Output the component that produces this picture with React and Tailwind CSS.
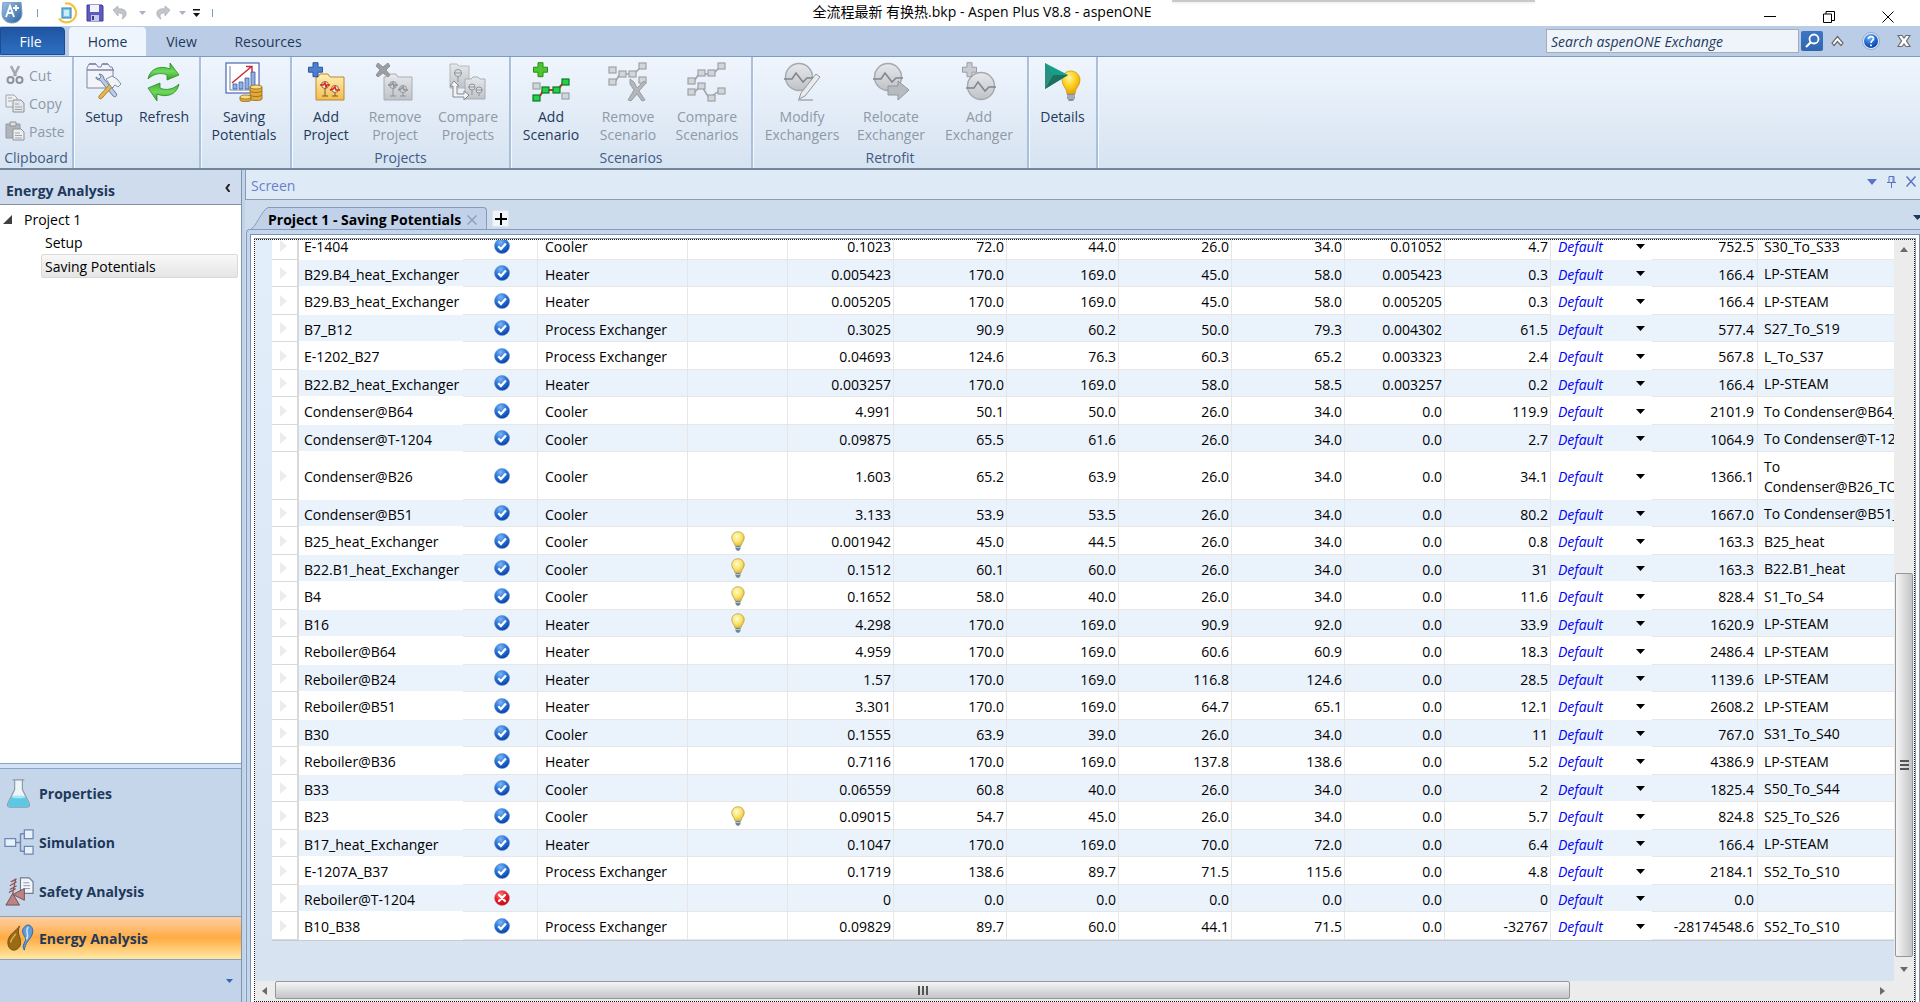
import { useState } from 'react';
import clsx from 'clsx';

const ROWS = [
  ['E-1404', 'ok', 'Cooler', false, '0.1023', '72.0', '44.0', '26.0', '34.0', '0.01052', '4.7', '752.5', 'S30_To_S33'],
  ['B29.B4_heat_Exchanger', 'ok', 'Heater', false, '0.005423', '170.0', '169.0', '45.0', '58.0', '0.005423', '0.3', '166.4', 'LP-STEAM'],
  ['B29.B3_heat_Exchanger', 'ok', 'Heater', false, '0.005205', '170.0', '169.0', '45.0', '58.0', '0.005205', '0.3', '166.4', 'LP-STEAM'],
  ['B7_B12', 'ok', 'Process Exchanger', false, '0.3025', '90.9', '60.2', '50.0', '79.3', '0.004302', '61.5', '577.4', 'S27_To_S19'],
  ['E-1202_B27', 'ok', 'Process Exchanger', false, '0.04693', '124.6', '76.3', '60.3', '65.2', '0.003323', '2.4', '567.8', 'L_To_S37'],
  ['B22.B2_heat_Exchanger', 'ok', 'Heater', false, '0.003257', '170.0', '169.0', '58.0', '58.5', '0.003257', '0.2', '166.4', 'LP-STEAM'],
  ['Condenser@B64', 'ok', 'Cooler', false, '4.991', '50.1', '50.0', '26.0', '34.0', '0.0', '119.9', '2101.9', 'To Condenser@B64_TO'],
  ['Condenser@T-1204', 'ok', 'Cooler', false, '0.09875', '65.5', '61.6', '26.0', '34.0', '0.0', '2.7', '1064.9', 'To Condenser@T-1204'],
  ['Condenser@B26', 'ok', 'Cooler', false, '1.603', '65.2', '63.9', '26.0', '34.0', '0.0', '34.1', '1366.1', 'To\nCondenser@B26_TO'],
  ['Condenser@B51', 'ok', 'Cooler', false, '3.133', '53.9', '53.5', '26.0', '34.0', '0.0', '80.2', '1667.0', 'To Condenser@B51_TO'],
  ['B25_heat_Exchanger', 'ok', 'Cooler', true, '0.001942', '45.0', '44.5', '26.0', '34.0', '0.0', '0.8', '163.3', 'B25_heat'],
  ['B22.B1_heat_Exchanger', 'ok', 'Cooler', true, '0.1512', '60.1', '60.0', '26.0', '34.0', '0.0', '31', '163.3', 'B22.B1_heat'],
  ['B4', 'ok', 'Cooler', true, '0.1652', '58.0', '40.0', '26.0', '34.0', '0.0', '11.6', '828.4', 'S1_To_S4'],
  ['B16', 'ok', 'Heater', true, '4.298', '170.0', '169.0', '90.9', '92.0', '0.0', '33.9', '1620.9', 'LP-STEAM'],
  ['Reboiler@B64', 'ok', 'Heater', false, '4.959', '170.0', '169.0', '60.6', '60.9', '0.0', '18.3', '2486.4', 'LP-STEAM'],
  ['Reboiler@B24', 'ok', 'Heater', false, '1.57', '170.0', '169.0', '116.8', '124.6', '0.0', '28.5', '1139.6', 'LP-STEAM'],
  ['Reboiler@B51', 'ok', 'Heater', false, '3.301', '170.0', '169.0', '64.7', '65.1', '0.0', '12.1', '2608.2', 'LP-STEAM'],
  ['B30', 'ok', 'Cooler', false, '0.1555', '63.9', '39.0', '26.0', '34.0', '0.0', '11', '767.0', 'S31_To_S40'],
  ['Reboiler@B36', 'ok', 'Heater', false, '0.7116', '170.0', '169.0', '137.8', '138.6', '0.0', '5.2', '4386.9', 'LP-STEAM'],
  ['B33', 'ok', 'Cooler', false, '0.06559', '60.8', '40.0', '26.0', '34.0', '0.0', '2', '1825.4', 'S50_To_S44'],
  ['B23', 'ok', 'Cooler', true, '0.09015', '54.7', '45.0', '26.0', '34.0', '0.0', '5.7', '824.8', 'S25_To_S26'],
  ['B17_heat_Exchanger', 'ok', 'Heater', false, '0.1047', '170.0', '169.0', '70.0', '72.0', '0.0', '6.4', '166.4', 'LP-STEAM'],
  ['E-1207A_B37', 'ok', 'Process Exchanger', false, '0.1719', '138.6', '89.7', '71.5', '115.6', '0.0', '4.8', '2184.1', 'S52_To_S10'],
  ['Reboiler@T-1204', 'error', '', false, '0', '0.0', '0.0', '0.0', '0.0', '0.0', '0', '0.0', ''],
  ['B10_B38', 'ok', 'Process Exchanger', false, '0.09829', '89.7', '60.0', '44.1', '71.5', '0.0', '-32767', '-28174548.6', 'S52_To_S10'],
];

const COLS = [
  'w-[27px]', 'w-[164px]', 'w-[75px]', 'w-[150px]', 'w-[100px]', 'w-[106px]', 'w-[113px]', 'w-[112px]',
  'w-[113px]', 'w-[113px]', 'w-[100px]', 'w-[106px]', 'w-[101px]', 'w-[106px]', 'w-[240px]',
];

/* ---------- shared gradients ---------- */

const Gradients = () => (
  <svg className="absolute h-0 w-0" aria-hidden="true">
    <defs>
      <radialGradient id="okBall" cx="40%" cy="25%" r="75%">
        <stop offset="0" stopColor="#7db6f5" />
        <stop offset="0.5" stopColor="#2a77dc" />
        <stop offset="1" stopColor="#0a3fa6" />
      </radialGradient>
      <radialGradient id="errBall" cx="40%" cy="30%" r="75%">
        <stop offset="0" stopColor="#ff8080" />
        <stop offset="0.5" stopColor="#e8202a" />
        <stop offset="1" stopColor="#b30510" />
      </radialGradient>
      <radialGradient id="bulbGlass" cx="40%" cy="35%" r="65%">
        <stop offset="0" stopColor="#fffbd0" />
        <stop offset="0.6" stopColor="#fbe36a" />
        <stop offset="1" stopColor="#e3b93a" />
      </radialGradient>
      <radialGradient id="bulbGold" cx="40%" cy="30%" r="75%">
        <stop offset="0" stopColor="#fff3a0" />
        <stop offset="0.5" stopColor="#fcd01c" />
        <stop offset="1" stopColor="#e09a08" />
      </radialGradient>
      <linearGradient id="greenArrow" x1="0" y1="0" x2="0" y2="1">
        <stop offset="0" stopColor="#3fae35" />
        <stop offset="0.5" stopColor="#6fd95c" />
        <stop offset="1" stopColor="#2f9e28" />
      </linearGradient>
      <linearGradient id="folderGold" x1="0" y1="0" x2="0" y2="1">
        <stop offset="0" stopColor="#fff0b8" />
        <stop offset="1" stopColor="#f3bd4d" />
      </linearGradient>
      <linearGradient id="grayFill" x1="0" y1="0" x2="0" y2="1">
        <stop offset="0" stopColor="#e6e8ea" />
        <stop offset="1" stopColor="#bfc3c8" />
      </linearGradient>
      <linearGradient id="logoFill" x1="0" y1="0" x2="1" y2="1">
        <stop offset="0" stopColor="#9cc3e6" />
        <stop offset="1" stopColor="#2c619e" />
      </linearGradient>
    </defs>
  </svg>
);

/* ---------- table icons ---------- */

const StatusIcon = ({ status }) => (
  <svg className="mx-auto h-4 w-4" viewBox="0 0 16 16">
    <circle cx="8" cy="8" r="7.5" fill={status === 'ok' ? 'url(#okBall)' : 'url(#errBall)'} stroke={status === 'ok' ? '#5e8fd0' : '#d98a8a'} strokeWidth="0.6" />
    {status === 'ok' ? (
      <path d="M4.3 8.2l2.6 2.8 5-5.6" fill="none" stroke="#fff" strokeWidth="2.2" />
    ) : (
      <path d="M5 5l6 6M11 5l-6 6" fill="none" stroke="#fff" strokeWidth="2.2" strokeLinecap="round" />
    )}
  </svg>
);

const BulbIcon = () => (
  <svg className="mx-auto h-5 w-4" viewBox="0 0 16 20">
    <path d="M8 .8C4 .8 1.8 3.600 1.8 6.800c0 3.200 2.600 4.600 3.200 8h6c.6-3.400 3.200-4.800 3.200-8C14.200 3.600 12 .8 8 .8z" fill="url(#bulbGlass)" stroke="#b9a04a" strokeWidth="0.8" />
    <path d="M5.500 15h5v3l-1.500 1.800h-2L5.500 18z" fill="#6f8794" />
    <path d="M5.500 16.500h5" stroke="#c8d6de" strokeWidth="0.8" />
  </svg>
);

/* ---------- ribbon icons ---------- */

const Plus = ({ x, y, fill, stroke }) => (
  <path transform={`translate(${x} ${y})`} d="M5 .7h5v4.500h4.500v5H10v4.500H5v-4.500H.5v-5H5z" fill={fill} stroke={stroke} strokeWidth="1" />
);

const Node = ({ x, y, on }) => (
  <rect x={x} y={y} width="7" height="6" fill={on ? '#22d04a' : '#d3d6d9'} stroke={on ? '#0b7a25' : '#9da2a8'} strokeWidth="1.200" />
);

const SetupIcon = () => (
  <>
    <path d="M3 26V6l2-4h7l2 3h3l1-3h6l2 3h2l1 3v18z" fill="#f3f4f9" stroke="#7d86a5" />
    <path d="M3 8h27M5 2h7M18 2h6" stroke="#7d86a5" strokeWidth="1.400" fill="none" />
    <path d="M16 18c-3 0-4-1-4-3l3 2 2-2-2-3c3 0 5 2 5 5l12 14c2 3-1 5-3 3z" fill="#b9cbe6" stroke="#5f7392" strokeWidth="0.900" />
    <path d="M26 22L15 34c-1 3 2 4 4 1l10-11z" fill="#e6b54c" stroke="#a8782a" strokeWidth="0.900" />
    <path d="M22 17l6-3 5 3 4 5-3 3-3-2-3 3z" fill="#f1f3f6" stroke="#7b8496" strokeWidth="0.900" />
  </>
);

const RefreshIcon = () => (
  <>
    <path d="M4 17C6 6 17 3 26 7V1l9 12-12 5v-5C17 10 9 12 4 17z" fill="url(#greenArrow)" stroke="#2b8d25" strokeWidth="0.800" />
    <path d="M35 22c-2 11-13 14-22 10v7L4 26l12-5v5c6 3 14 1 19-4z" fill="url(#greenArrow)" stroke="#2b8d25" strokeWidth="0.800" />
  </>
);

const SavingIcon = () => (
  <>
    <rect x="2" y="1" width="33" height="30" fill="#fff" stroke="#4a68b0" strokeWidth="1.200" />
    <path d="M6 4v24h27" stroke="#6c7da8" fill="none" />
    <path d="M9 27v-5h4v5zM15 27v-7h4v7zM21 27V16h4v11zM27 27V10h4v17z" fill="#8fb0e4" stroke="#3a5ba5" strokeWidth="0.800" />
    <path d="M8 21L27 5M22 4.500h6v6" stroke="#c62a35" strokeWidth="1.400" fill="none" />
    <path d="M26 25v12c0 2 12 2 12 0V25z" fill="#e3a93a" stroke="#8f6618" strokeWidth="0.800" />
    <ellipse cx="32" cy="25" rx="6" ry="2" fill="#f9dc83" stroke="#8f6618" strokeWidth="0.800" />
    <path d="M26 29c2 2 10 2 12 0M26 33c2 2 10 2 12 0M16 35v3c0 2 11 2 11 0v-3" stroke="#8f6618" fill="#e3a93a" strokeWidth="0.800" />
    <ellipse cx="21.500" cy="35" rx="5.500" ry="2" fill="#f9dc83" stroke="#8f6618" strokeWidth="0.800" />
  </>
);

const Folder = ({ x, y, gray }) => (
  <g transform={`translate(${x} ${y})`}>
    <path d="M1 3h2l2-3h8l2 3h14v23H1z" fill={gray ? 'url(#grayFill)' : 'url(#folderGold)'} stroke={gray ? '#a9adb3' : '#b98732'} />
    <circle cx="10" cy="11" r="3.500" fill={gray ? '#d5d8db' : '#fdf0cf'} stroke={gray ? '#8f949a' : '#7d6a43'} />
    <circle cx="20" cy="15" r="3.500" fill={gray ? '#d5d8db' : '#fdf0cf'} stroke={gray ? '#8f949a' : '#7d6a43'} />
    <path d="M5 11h3l2-2 1 4 1-2h3M15 16l3-1 2-2 1 3h4" stroke={gray ? '#8f949a' : '#e02020'} strokeWidth="1.500" fill="none" />
    <path d="M10 15v7M20 19v3M7 22h6M17 22h6" stroke={gray ? '#8f949a' : '#6e5a30'} fill="none" />
  </g>
);

const AddProjectIcon = () => (
  <>
    <Folder x={9} y={12} />
    <Plus x={2} y={0} fill="#4c7fd0" stroke="#2a549c" />
  </>
);

const RemoveProjectIcon = () => (
  <>
    <Folder x={8} y={12} gray />
    <path d="M3 1l5 4 5-4 2 3-4 4 4 5-2 2-5-4-5 4-2-2 4-5-4-4z" fill="#9b9ea2" stroke="#85898e" strokeWidth="0.800" />
  </>
);

const CompareProjectsIcon = () => (
  <>
    <path d="M2 2h7l2 2h10v22H2z" fill="url(#grayFill)" stroke="#b4b8bd" />
    <circle cx="10" cy="11" r="3.500" fill="#dcdfe2" stroke="#8f949a" />
    <path d="M6 11h8M10 15v5" stroke="#8f949a" />
    <path d="M17 17h6l2-2h5l2 2h5v20H17z" fill="url(#grayFill)" stroke="#a9adb3" />
    <circle cx="24" cy="25" r="3" fill="#dcdfe2" stroke="#8f949a" />
    <circle cx="31" cy="28" r="3" fill="#dcdfe2" stroke="#8f949a" />
    <path d="M20 25h7M28 28h7M24 28v5M31 31v3" stroke="#8f949a" />
    <path d="M6 19l-4 5h3v11h11v3l5-5-5-4v3H9v-8h2z" fill="#f3f4f5" stroke="#85898e" />
  </>
);

const AddScenarioIcon = () => (
  <>
    <path d="M9 34l4-7M15 28h10M28 26l5-6" stroke="#ee2222" strokeWidth="2" />
    <Node x={2} y={21} />
    <Node x={31} y={31} />
    <Node x={2} y={33} on />
    <Node x={11} y={25} on />
    <Node x={22} y={25} on />
    <Node x={31} y={17} on />
    <Plus x={2} y={0} fill="#4cc52e" stroke="#2b8a18" />
  </>
);

const RemoveScenarioIcon = () => (
  <>
    <path d="M7 20l5-8M15 12h10M27 11l5-5" stroke="#9da2a8" strokeWidth="1.500" />
    <Node x={1} y={5} />
    <Node x={1} y={17} />
    <Node x={11} y={9} />
    <Node x={21} y={9} />
    <Node x={31} y={1} />
    <Node x={31} y={15} />
    <path d="M22 17l4 3 3 6 7-7 2 2-7 8 6 9-3 1-5-7-6 7-3-1 6-10-4-6z" fill="#b3b7bb" stroke="#999ea3" />
  </>
);

const CompareScenariosIcon = () => (
  <>
    <path d="M7 19l5-7M15 12h10M27 11l5-5M7 31l7-8 8 13 10-7" stroke="#9da2a8" strokeWidth="1.500" fill="none" />
    <Node x={1} y={16} />
    <Node x={11} y={8} />
    <Node x={21} y={8} />
    <Node x={31} y={1} />
    <Node x={1} y={27} />
    <Node x={11} y={21} />
    <Node x={21} y={33} />
    <Node x={31} y={26} />
  </>
);

const Exchanger = ({ x, y }) => (
  <g transform={`translate(${x} ${y})`}>
    <circle cx="15" cy="15" r="13.500" fill="url(#grayFill)" stroke="#a4a9ae" strokeWidth="1.400" />
    <path d="M0 17h8l4-6 7 9 4-4h7" fill="none" stroke="#7f858b" strokeWidth="1.500" />
  </g>
);

const ModifyIcon = () => (
  <>
    <Exchanger x={2} y={0} />
    <path d="M34 12l4 3-15 19-6 3 2-6z" fill="#e9ebed" stroke="#92979c" />
    <path d="M16 38h15" stroke="#a4a9ae" strokeWidth="1.500" />
  </>
);

const RelocateIcon = () => (
  <>
    <Exchanger x={2} y={0} />
    <path d="M17 24h10v-5l11 9-11 10v-5H17z" fill="#b7bbbf" stroke="#92979c" />
  </>
);

const AddExchangerIcon = () => (
  <>
    <Exchanger x={7} y={9} />
    <Plus x={3} y={0} fill="#c9ccd0" stroke="#989da2" />
  </>
);

const DetailsIcon = () => (
  <>
    <path d="M28 9c-6 0-9 4-9 9 0 6 5 8 5 14h8c0-6 5-8 5-14 0-5-4-9-9-9z" fill="url(#bulbGold)" stroke="#d39a1b" strokeWidth="0.800" />
    <path d="M24 32h8v4l-2 3h-4l-2-3z" fill="#87909a" />
    <path d="M24 34h8M25 36h6" stroke="#c9d0d6" strokeWidth="0.900" />
    <path d="M2 1v26l23-14z" fill="#12a08a" />
    <path d="M2 27l23-14H10z" fill="#1d6f5f" />
    <path d="M2 1l8 12-8 14z" fill="#2b8f7f" />
  </>
);

const RIBBON = [
  {
    label: '',
    width: 'w-[127px]',
    items: [
      { label: ['Setup'], icon: SetupIcon, width: 'w-[60px]' },
      { label: ['Refresh'], icon: RefreshIcon, width: 'w-[60px]' },
    ],
  },
  { label: '', width: 'w-[91px]', items: [{ label: ['Saving', 'Potentials'], icon: SavingIcon, width: 'w-[86px]' }] },
  {
    label: 'Projects',
    width: 'w-[219px]',
    items: [
      { label: ['Add', 'Project'], icon: AddProjectIcon, width: 'w-[68px]' },
      { label: ['Remove', 'Project'], icon: RemoveProjectIcon, width: 'w-[70px]', off: true },
      { label: ['Compare', 'Projects'], icon: CompareProjectsIcon, width: 'w-[76px]', off: true },
    ],
  },
  {
    label: 'Scenarios',
    width: 'w-[242px]',
    items: [
      { label: ['Add', 'Scenario'], icon: AddScenarioIcon, width: 'w-[80px]' },
      { label: ['Remove', 'Scenario'], icon: RemoveScenarioIcon, width: 'w-[74px]', off: true },
      { label: ['Compare', 'Scenarios'], icon: CompareScenariosIcon, width: 'w-[84px]', off: true },
    ],
  },
  {
    label: 'Retrofit',
    width: 'w-[276px]',
    items: [
      { label: ['Modify', 'Exchangers'], icon: ModifyIcon, width: 'w-[98px]', off: true },
      { label: ['Relocate', 'Exchanger'], icon: RelocateIcon, width: 'w-[80px]', off: true },
      { label: ['Add', 'Exchanger'], icon: AddExchangerIcon, width: 'w-[96px]', off: true },
    ],
  },
  { label: '', width: 'w-[69px]', items: [{ label: ['Details'], icon: DetailsIcon, width: 'w-[68px]' }] },
];

const CLIPBOARD = [
  {
    label: 'Cut',
    art: (
      <>
        <path d="M6 1l5 10M14 1L9 11" stroke="#a3a8ad" strokeWidth="2.500" />
        <circle cx="5.500" cy="15" r="3" fill="none" stroke="#8d9298" strokeWidth="2" />
        <circle cx="14.500" cy="15" r="3" fill="none" stroke="#8d9298" strokeWidth="2" />
      </>
    ),
  },
  {
    label: 'Copy',
    art: (
      <>
        <path d="M1 2h8l3 3v9H1z" fill="#eceef0" stroke="#a1a6ab" />
        <path d="M8 7h8l3 3v9H8z" fill="#e3e5e8" stroke="#8d9298" />
        <path d="M3 5h4M3 8h4M10 11h4M10 14h7M10 16.500h7" stroke="#a1a6ab" />
      </>
    ),
  },
  {
    label: 'Paste',
    art: (
      <>
        <path d="M1 3h14v14H1z" fill="#b1b5ba" stroke="#959a9f" />
        <path d="M5 1h6v4H5z" fill="#dcdee1" stroke="#8d9298" />
        <path d="M8 8h8l3 3v8H8z" fill="#eceef0" stroke="#8d9298" />
        <path d="M10 12h5M10 14.500h7M10 17h7" stroke="#a1a6ab" />
      </>
    ),
  },
];

const NAV = [
  {
    label: 'Properties',
    art: (
      <>
        <path d="M9 2h12M11 2v10L4 26c-1 3 0 4 2 4h18c2 0 3-1 2-4l-7-14V2" fill="#eef5f9" stroke="#8a9aa6" strokeWidth="1.200" />
        <path d="M8 19h14l4 8c0 2-1 3-3 3H7c-2 0-3-1-3-3z" fill="#5cc8e4" />
        <ellipse cx="15" cy="19.500" rx="7" ry="1.500" fill="#a6e6f4" />
      </>
    ),
  },
  {
    label: 'Simulation',
    art: (
      <>
        <path d="M12 16h5M17 7v18M17 7h4M17 25h4" fill="none" stroke="#6f86b4" strokeWidth="1.500" />
        <rect x="1" y="12" width="11" height="8" fill="#e8f0fb" stroke="#6f86b4" strokeWidth="1.300" />
        <rect x="21" y="3" width="9" height="9" fill="#e8f0fb" stroke="#6f86b4" strokeWidth="1.300" />
        <rect x="21" y="20" width="9" height="8" fill="#e8f0fb" stroke="#6f86b4" strokeWidth="1.300" />
      </>
    ),
  },
  {
    label: 'Safety Analysis',
    art: (
      <>
        <path d="M17 2h9l4 4v12H17z" fill="#f2f5f9" stroke="#6e7c92" strokeWidth="1.200" />
        <path d="M20 7h6M20 10h7M20 13h7" stroke="#8b98ad" />
        <path d="M9 18l-7 12h14zM9 19l12-6v12z" fill="#b98486" stroke="#7c4c50" />
        <path d="M9 18l3-15M6 14l7-4M6 10l7-4M7 6l6-3M5 17l7-4" stroke="#8c5559" strokeWidth="1.300" />
      </>
    ),
  },
  {
    label: 'Energy Analysis',
    art: (
      <>
        <path d="M16 3c-3 5-12 9-12 17 0 5 3 8 6 8s8-3 7-9c0-5-4-8-1-16z" fill="#9a6b12" stroke="#6e4a0b" />
        <path d="M7 20c0-4 4-6 5-9" stroke="#d9b35c" fill="none" strokeWidth="1.500" />
        <path d="M19 8c1-4 4-6 6-6 5 1 6 7 3 12-2 4-6 6-7 14-4-5 3-9 1-13-1-2-3-4-3-7z" fill="#5e9bd8" stroke="#2d67a8" />
        <path d="M25 4c-4 5 2 8-2 13" stroke="#d5e8fa" fill="none" strokeWidth="1.500" />
      </>
    ),
  },
];

/* ---------- window parts ---------- */

const TitleBar = () => (
  <header className="relative flex h-[26px] shrink-0 items-center bg-white pl-px">
    <div className="absolute top-0 left-[1172px] h-0.5 w-[363px] bg-[#c9c9c9] shadow" />
    <div className="flex items-center">
      <svg className="h-[22px] w-[22px]" viewBox="0 0 22 22">
        <path d="M2 0h18l1 11c0 6-4 10-10 10S1 17 1 11z" fill="url(#logoFill)" stroke="#7d9cc0" />
        <path d="M5 15l4-11 4 11M7 11h5M15 3v6M12 6h6" stroke="#fff" strokeWidth="1.800" fill="none" />
      </svg>
      <span className="ml-[14px] h-2 w-px bg-[#7d9cc0]" />
      <button aria-label="Run" className="ml-[18px]">
        <svg className="h-[22px] w-[22px]" viewBox="0 0 22 22">
          <path d="M9 1.500a9.500 9.500 0 1 1-6 15" fill="none" stroke="#f5c33c" strokeWidth="2.200" />
          <rect x="6" y="6" width="9" height="10" fill="#7cc4ea" stroke="#2b7fae" />
          <rect x="8" y="8" width="5" height="6" fill="#c9ebfa" />
        </svg>
      </button>
      <button aria-label="Save" className="ml-2">
        <svg className="h-[18px] w-[18px]" viewBox="0 0 18 18">
          <path d="M1 1h15l1 1v15H1z" fill="#5f5ac0" stroke="#3f3b96" />
          <path d="M4 1h9v7H4z" fill="#f3f4fb" />
          <path d="M5 11h8v6H5z" fill="#c9cbe4" />
          <path d="M6 12h2v4H6z" fill="#3f3b96" />
        </svg>
      </button>
      <button aria-label="Undo" className="ml-2">
        <svg className="h-4 w-4" viewBox="0 0 16 16">
          <path d="M1 5l5-4v3c6-1 9 2 8 6-1 2-2 3-4 4 2-4 1-6-4-6v3z" fill="#c2c5c9" stroke="#a7abb0" strokeWidth="0.700" />
        </svg>
      </button>
      <svg className="ml-[11px] h-1 w-[7px]" viewBox="0 0 7 4"><path d="M0 0h7L3.500 4z" fill="#a9b3c3" /></svg>
      <button aria-label="Redo" className="ml-[9px]">
        <svg className="h-4 w-4" viewBox="0 0 16 16">
          <path d="M15 5l-5-4v3C4 3 1 6 2 10c1 2 2 3 4 4-2-4-1-6 4-6v3z" fill="#c2c5c9" stroke="#a7abb0" strokeWidth="0.700" />
        </svg>
      </button>
      <svg className="ml-2 h-1 w-[7px]" viewBox="0 0 7 4"><path d="M0 0h7L3.500 4z" fill="#a9b3c3" /></svg>
      <svg className="ml-[7px] h-2 w-[7px]" viewBox="0 0 7 8"><path d="M0 0h7v1.500H0zM0 4h7L3.500 8z" fill="#111" /></svg>
      <span className="ml-3 h-2 w-px bg-[#7d9cc0]" />
    </div>
    <h1 className="pointer-events-none absolute inset-x-0 top-[3px] mr-[-44px] text-center text-[14px] leading-[18px] text-black">
      全流程最新 有换热.bkp - Aspen Plus V8.8 - aspenONE
    </h1>
    <div className="ml-auto flex items-end gap-[47px] self-end pr-[26px] pb-[3px]">
      <button aria-label="Minimize" className="pb-[6px]">
        <svg className="h-px w-3" viewBox="0 0 12 1"><path d="M0 0h12v1H0z" /></svg>
      </button>
      <button aria-label="Restore">
        <svg className="h-3 w-3" viewBox="0 0 12 12">
          <path d="M.5 3h8v8.500h-8zM3 3V.5h8.500v9H9" fill="none" stroke="#000" />
        </svg>
      </button>
      <button aria-label="Close">
        <svg className="h-3 w-3" viewBox="0 0 12 12"><path d="M.5.5l11 11M11.500.5l-11 11" stroke="#000" /></svg>
      </button>
    </div>
  </header>
);

const TabBar = () => (
  <nav className="flex h-[31px] shrink-0 items-end border-b border-[#7f9cc0] bg-[#bbcde6] text-[14px] text-[#1e395b]">
    <button className="mt-px h-[28px] w-[65px] self-start rounded-tr border border-[#1d4c94] bg-linear-to-b from-[#1f55a3] to-[#2e6fc0] pr-1 text-white">
      File
    </button>
    <button className="ml-1 h-[29px] w-[77px] rounded-t bg-[#eff5fd]">Home</button>
    <button className="h-[29px] w-[71px]">View</button>
    <button className="h-[29px] w-[102px]">Resources</button>
    <div className="ml-auto flex items-center self-center pr-[9px]">
      <input
        type="search"
        aria-label="Search aspenONE Exchange"
        placeholder="Search aspenONE Exchange"
        className="h-6 w-[253px] border border-[#a9adb3] bg-[#eff4fb] px-1 text-[14px] italic placeholder:text-[#1e395b]"
      />
      <button aria-label="Search" className="ml-0.5 flex h-5 w-[22px] items-center justify-center rounded-xs bg-linear-to-b from-[#3c77c4] to-[#2f66ae]">
        <svg className="h-4 w-4" viewBox="0 0 16 16">
          <circle cx="10" cy="6" r="4.500" fill="none" stroke="#fff" strokeWidth="1.800" />
          <path d="M7 9l-5 5" stroke="#fff" strokeWidth="2.200" />
        </svg>
      </button>
      <button aria-label="Collapse ribbon" className="ml-2">
        <svg className="h-3 w-[13px]" viewBox="0 0 13 12">
          <path d="M6.500 1.500L12 8l-2 2.500-3.500-4-3.500 4L1 8z" fill="#fff" stroke="#6b6b6b" strokeWidth="1.200" />
        </svg>
      </button>
      <button aria-label="Help" className="ml-[18px]">
        <svg className="h-[18px] w-[18px]" viewBox="0 0 18 18">
          <circle cx="9" cy="9" r="8.500" fill="#e6eefb" stroke="#8ea8cf" />
          <circle cx="9" cy="9" r="7" fill="url(#okBall)" />
          <path d="M6.500 7c0-3.500 5.500-3 5 0-.3 1.800-2.500 1.800-2.500 4M9 12.500v1.800" fill="none" stroke="#fff" strokeWidth="1.700" />
        </svg>
      </button>
      <button aria-label="Close document" className="ml-[17px]">
        <svg className="h-[14px] w-[14px]" viewBox="0 0 14 14">
          <path d="M1 1.500h4l2 2.500 2-2.500h4L9.500 7l3.500 5.500H9L7 10l-2 2.500H1L4.500 7z" fill="#fff" stroke="#6b6b6b" strokeWidth="1.200" />
        </svg>
      </button>
    </div>
  </nav>
);

const RibbonGroup = ({ label, width, children }) => (
  <section className={clsx('flex shrink-0 flex-col border-r-2 border-[#a9bfdc] shadow-[1px_0_0_#f4f9ff]', width)}>
    <div className="flex grow">{children}</div>
    <div className="h-5 text-center leading-5 whitespace-nowrap text-[#3f5b85]">{label}</div>
  </section>
);

const Ribbon = () => (
  <div className="flex h-[113px] shrink-0 border-b-2 border-[#74859a] bg-linear-to-b from-[#eff5fd] to-[#d6e3f1] text-[14px] text-[#1e395b]">
    <RibbonGroup label="Clipboard" width="w-[74px]">
      <div className="flex flex-col pt-1 pl-[5px]">
        {CLIPBOARD.map((c) => (
          <button key={c.label} disabled className="flex h-7 items-center gap-1 text-[#8f99a5]">
            <svg className="h-5 w-5" viewBox="0 0 20 20">{c.art}</svg>
            {c.label}
          </button>
        ))}
      </div>
    </RibbonGroup>
    {RIBBON.map((g, i) => (
      <RibbonGroup key={i} label={g.label} width={g.width}>
        {g.items.map((item) => (
          <button
            key={item.label.join(' ')}
            disabled={item.off}
            className={clsx('flex flex-col items-center pt-[5px]', item.width, item.off && 'text-[#8f99a5]')}
          >
            <svg className="mb-[6px] h-10 w-10" viewBox="0 0 40 40">
              <item.icon />
            </svg>
            {item.label.map((line) => (
              <span key={line} className="leading-[18px]">{line}</span>
            ))}
          </button>
        ))}
      </RibbonGroup>
    ))}
  </div>
);

const Sidebar = () => (
  <aside className="flex w-[242px] shrink-0 flex-col border-r border-[#8494ab] bg-[#c5d6ea]">
    <div className="flex h-[35px] shrink-0 items-center justify-between border-b border-[#868e9b] bg-[#cfdcee] pt-[6px] pr-[11px] pl-[6px] text-[14px] text-[#1e395b]">
      <h2 className="font-bold">Energy Analysis</h2>
      <button aria-label="Collapse" className="pb-[5px]">
        <svg className="h-[8px] w-[5px]" viewBox="0 0 5 8"><path d="M4.500 0L1.500 4l3 4" fill="none" stroke="#222" strokeWidth="2" /></svg>
      </button>
    </div>
    <ul className="grow bg-white pt-[3px] text-[14px] text-black">
      <li>
        <div className="flex h-[23px] items-center pl-[3px]">
          <svg className="mr-3 h-[9px] w-[9px]" viewBox="0 0 9 9"><path d="M9 0v9H0z" fill="#404040" /></svg>
          Project 1
        </div>
        <ul className="pr-[3px] pl-[41px]">
          <li className="flex h-[23px] items-center pl-1">Setup</li>
          <li className="flex h-6 items-center rounded-xs border border-[#d9d9d9] bg-linear-to-b from-[#f8f8f8] to-[#e5e5e5] pl-[3px]">Saving Potentials</li>
        </ul>
      </li>
    </ul>
    <div className="h-[6px] shrink-0 border-y border-[#8aa3c8] bg-[#d3e3f8]" />
    <nav className="flex shrink-0 flex-col">
      {NAV.map((n, i) => {
        const active = i === NAV.length - 1;
        return (
          <button
            key={n.label}
            className={clsx(
              'flex items-center gap-1 pl-1 text-[14px] font-bold text-[#1e395b]',
              active
                ? 'h-11 border-y border-[#8aa0c0] bg-linear-to-b from-[#fdcfa0] via-[#ffab3f] to-[#ffe9a2]'
                : 'h-[49px]',
            )}
          >
            <svg className="h-[31px] w-[31px]" viewBox="0 0 32 32">{n.art}</svg>
            {n.label}
          </button>
        );
      })}
      <div className="flex h-[42px] items-center justify-end bg-[#c2d3ea] pr-2">
        <svg className="h-[5px] w-[7px]" viewBox="0 0 7 5"><path d="M0 0h7L3.500 4z" fill="#3465b0" /></svg>
      </div>
    </nav>
  </aside>
);

const Arrow = ({ d, label, className }) => (
  <button aria-label={label} className={clsx('flex shrink-0 items-center justify-center', className)}>
    <svg className="h-2 w-2" viewBox="0 0 8 8"><path d={d} fill="#6a6a6a" /></svg>
  </button>
);

const ExchangerRow = ({ row, index, basis, onBasis }) => {
  const [name, status, type, hint, ...rest] = row;
  const nums = rest.slice(0, 7);
  const [price, stream] = rest.slice(7);
  const blue = index % 2 === 1;
  const cell = 'border-r border-b border-[#e6e6e6]';
  return (
    <tr className={clsx(stream.includes('\n') ? 'h-12' : blue ? 'h-[27px]' : 'h-7', blue ? 'bg-[#eaf2fc]' : 'bg-white')}>
      <td className="border-r-2 border-b border-[#d9d9d9] bg-white">
        <svg className="ml-2 h-3 w-2" viewBox="0 0 8 12"><path d="M0 0l7 6-7 6z" fill="#ececec" /></svg>
      </td>
      <td className="border-b border-white pt-0.5 pl-[5px]">{name}</td>
      <td className={clsx(cell, 'pl-1')}><StatusIcon status={status} /></td>
      <td className={clsx(cell, 'pt-0.5 pl-[7px]')}>{type}</td>
      <td className={cell}>{hint && <BulbIcon />}</td>
      {nums.map((n, i) => (
        <td key={i} className={clsx(cell, 'pt-0.5 pr-0.5 text-right')}>{n}</td>
      ))}
      <td className="border-b border-white pt-0.5">
        <div className="relative">
          <select
            aria-label={`Basis for ${name}`}
            value={basis}
            onChange={(e) => onBasis(name, e.target.value)}
            className="block h-6 w-full appearance-none rounded-xs pl-[7px] italic text-[#0000f0] outline-none"
          >
            <option>Default</option>
          </select>
          <svg className="pointer-events-none absolute top-[9px] right-[7px] h-[5px] w-[9px]" viewBox="0 0 9 5"><path d="M0 0h9L4.500 5z" /></svg>
        </div>
      </td>
      <td className={clsx(cell, 'pt-0.5 pr-[3px] text-right')}>{price}</td>
      <td className="border-b border-[#e6e6e6] pt-0.5 pl-[6px] leading-5 whitespace-pre">{stream}</td>
    </tr>
  );
};

const Grid = () => {
  const [basis, setBasis] = useState({});

  const handleBasis = (name, value) => setBasis({ ...basis, [name]: value });

  return (
    <div className="flex min-h-0 grow flex-col border border-dotted border-[#111]">
      <div className="flex min-h-0 grow">
        {/* scrolled to the last row, so rows pile up from the bottom edge */}
        <div className="flex min-w-0 grow flex-col justify-end overflow-hidden bg-linear-to-b from-[#e3eefb] to-[#d7e3f1] pb-10 pl-[17px]">
          <table className="w-[1726px] table-fixed border-separate border-spacing-0 border-b border-[#c8ccd2] text-[14px] text-black">
            <colgroup>
              {COLS.map((w, i) => <col key={i} className={w} />)}
            </colgroup>
            <tbody>
              {ROWS.map((row, i) => (
                <ExchangerRow key={row[0]} row={row} index={i} basis={basis[row[0]] || 'Default'} onBasis={handleBasis} />
              ))}
            </tbody>
          </table>
        </div>
        <div className="flex w-5 shrink-0 flex-col bg-[#ececec]">
          <Arrow label="Scroll up" d="M0 6h8L4 1z" className="h-5" />
          <div className="grow-[314] basis-0" />
          <div className="mx-px flex grow-[383] basis-0 flex-col items-center justify-center gap-0.5 rounded-xs border border-[#979797] bg-linear-to-r from-[#f5f5f5] to-[#c4c5c9]">
            <i className="h-0.5 w-[9px] bg-[#555]" />
            <i className="h-0.5 w-[9px] bg-[#555]" />
            <i className="h-0.5 w-[9px] bg-[#555]" />
          </div>
          <Arrow label="Scroll down" d="M0 2h8L4 7z" className="h-6" />
        </div>
      </div>
      <div className="flex h-5 shrink-0 bg-[#ececec] pr-5">
        <Arrow label="Scroll left" d="M6 0v8L1 4z" className="w-5" />
        <div className="mb-0.5 flex grow-[1294] basis-0 items-center justify-center gap-0.5 rounded-xs border border-[#979797] bg-linear-to-b from-[#f5f5f5] to-[#c4c5c9]">
          <i className="h-[9px] w-0.5 bg-[#555]" />
          <i className="h-[9px] w-0.5 bg-[#555]" />
          <i className="h-[9px] w-0.5 bg-[#555]" />
        </div>
        <div className="grow-[300] basis-0" />
        <Arrow label="Scroll right" d="M2 0v8l5-4z" className="w-6" />
      </div>
    </div>
  );
};

const Workspace = () => (
  <main className="ml-[3px] flex min-w-0 grow flex-col bg-[#cddcec]">
    <div className="flex h-[30px] shrink-0 items-center border-b border-l border-[#8b9bb3] bg-[#deebf7] pt-0.5 pr-1 pl-[5px] text-[14px] text-[#6a7fc8]">
      <span>Screen</span>
      <div className="ml-auto flex items-center gap-[10px] pb-2">
        <svg className="h-[6px] w-[10px]" viewBox="0 0 10 6"><path d="M0 0h10L5 6z" fill="#5c72c4" /></svg>
        <button aria-label="Pin">
          <svg className="h-3 w-[9px]" viewBox="0 0 9 12"><path d="M2 .5h5v6H2zM0 6.500h9M4.500 7v5M6 1v5" fill="none" stroke="#5c72c4" /></svg>
        </button>
        <button aria-label="Close panel">
          <svg className="h-[11px] w-[10px]" viewBox="0 0 10 11"><path d="M.5.5l9 10M9.500.5l-9 10" stroke="#5c72c4" strokeWidth="1.500" /></svg>
        </button>
      </div>
    </div>
    <div className="flex h-[29px] shrink-0 items-end pl-[6px]">
      <svg className="h-[22px] w-[17px]" viewBox="0 0 17 22">
        <path d="M0 22C6 20 11 4 17 .5V22z" fill="#c1d1ea" />
        <path d="M0 22C5 20 11 3 17 .5" fill="none" stroke="#8b9bb3" />
      </svg>
      <div className="flex h-[22px] items-center rounded-tr border-t border-r border-[#8b9bb3] bg-[#c1d1ea] pt-0.5 pr-[9px] text-[14px] text-black">
        <span className="font-bold whitespace-nowrap">Project 1 - Saving Potentials</span>
        <button aria-label="Close tab" className="ml-[6px]">
          <svg className="h-[10px] w-[10px]" viewBox="0 0 10 10"><path d="M.5.5l9 9M9.500.5l-9 9" stroke="#8d9bb0" strokeWidth="1.300" /></svg>
        </button>
      </div>
      <button aria-label="New tab" className="mb-0.5 ml-[5px] flex h-[17px] w-[17px] items-center justify-center rounded-xs border border-[#dfe5ee] bg-[#f1f5fa]">
        <svg className="h-3 w-3" viewBox="0 0 12 12"><path d="M5 0h2v5h5v2H7v5H5V7H0V5h5z" /></svg>
      </button>
      <svg className="mb-[9px] ml-auto h-[5px] w-[7px]" viewBox="0 0 7 5"><path d="M0 0h9L4.500 5z" fill="#1e395b" /></svg>
    </div>
    <div className="ml-px flex min-h-0 grow flex-col rounded-tl border-t border-l border-[#8b9bb3] bg-[#c3d6f0] pt-1 pl-[3px]">
      <div className="flex min-h-0 grow flex-col border-x border-t border-[#7f8fa9] bg-white px-[3px] pt-[3px]">
        <div className="flex min-h-0 grow flex-col border-t border-r border-[#8b9bb3]">
          <Grid />
        </div>
      </div>
    </div>
  </main>
);

const App = () => (
  <div className="flex h-screen min-w-[1200px] flex-col overflow-hidden bg-[#bfd3ed] font-['Open_Sans','Noto_Sans_CJK_SC',sans-serif]">
    <Gradients />
    <TitleBar />
    <TabBar />
    <Ribbon />
    <div className="flex min-h-0 grow">
      <Sidebar />
      <Workspace />
    </div>
  </div>
);

export default App;
